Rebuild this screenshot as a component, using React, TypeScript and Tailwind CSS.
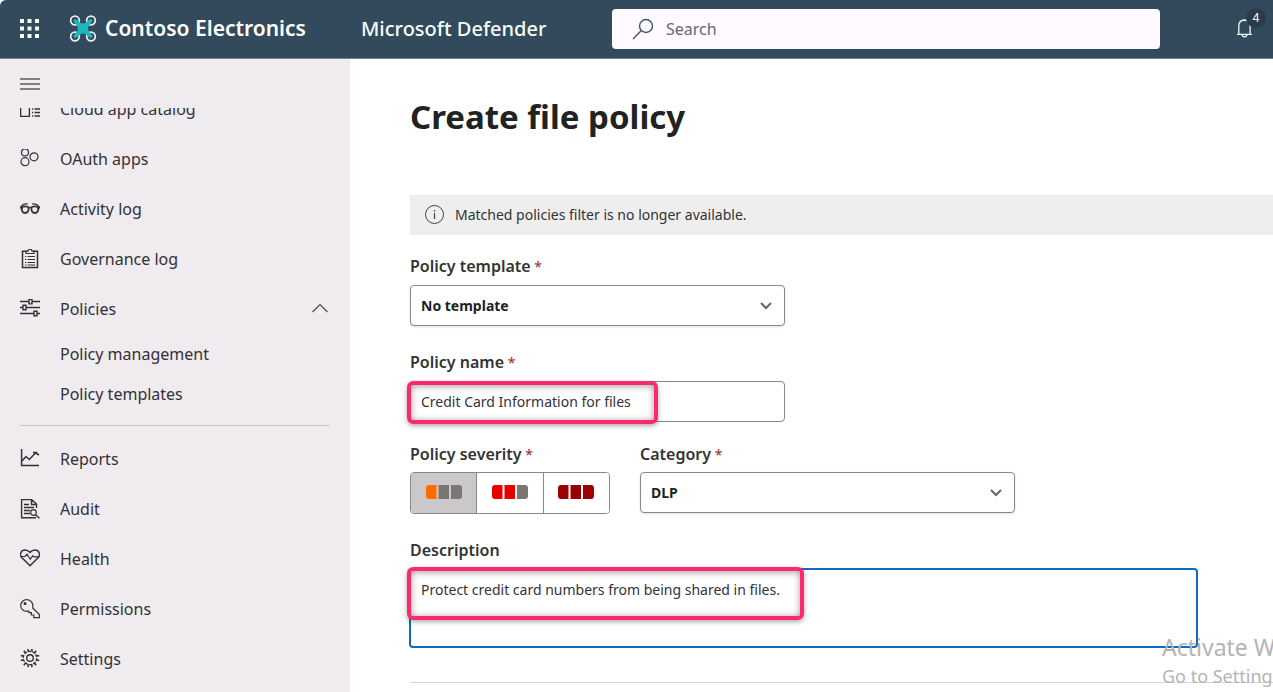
import React from "react";

type IconProps = { children: React.ReactNode };

function NavIcon({ children }: IconProps) {
  return (
    <svg
      viewBox="0 0 20 20"
      className="h-5 w-5 shrink-0"
      fill="none"
      stroke="#333237"
      strokeWidth="1.2"
      aria-hidden="true"
    >
      {children}
    </svg>
  );
}

const icons = {
  catalog: (
    <NavIcon>
      <path d="M.6 1v16.400h8.800V1z M12 10h1.200M14.500 10H20M12 13.500h1.200M14.500 13.500H20M12 17h1.200M14.500 17H20" strokeWidth="1.400" />
    </NavIcon>
  ),
  oauth: (
    <NavIcon>
      <circle cx="5" cy="3.400" r="3.500" />
      <circle cx="5" cy="12.700" r="4" />
      <circle cx="14" cy="7.800" r="4" />
    </NavIcon>
  ),
  glasses: (
    <NavIcon>
      <path d="M.5 9C1.500 6 4 4.700 8 5M19.500 9C18.500 6 16 4.700 12 5M8.500 9q1.500-1 3 0" />
      <path d="M1.800 8.200q3.200-1.700 6.800 0 .3 5.800-3.500 5.800T1.800 8.200zM18.200 8.200q-3.200-1.700-6.800 0-.3 5.800 3.500 5.800t3.300-5.800z" strokeWidth="1.800" />
      <path d="M.5 7.500l1.500 3M19.500 7.500l-1.500 3" strokeWidth="1.800" />
    </NavIcon>
  ),
  clipboard: (
    <NavIcon>
      <path d="M6.500 2.300h-4v16.200h15V2.300h-4" strokeWidth="1.500" />
      <path d="M6 4.500V2.100h2q.3-2 2-2t2 2h2v2.400z" />
      <path d="M5 7.500h1.300M7.500 7.500H15M5 10.500h1.300M7.500 10.500H15M5 13.500h1.300M7.500 13.500H15M5 16h1.300M7.500 16H15" />
    </NavIcon>
  ),
  sliders: (
    <NavIcon>
      <path d="M0 2.500h9M12 2.500h8M0 8.500h3M6 8.500h14M0 14.500h14M17 14.500h3" strokeWidth="1.500" />
      <path d="M9 .3h3v4.600H9zM3 6.200h3v4.600H3zM14 12.200h3v4.600h-3z" strokeWidth="1.400" />
    </NavIcon>
  ),
  reports: (
    <NavIcon>
      <path d="M1.600 0v16.500H19M2 12l4-4.500 3.300 3L16 3.500M13 3.500h3.500v1L19 6" strokeWidth="1.500" />
    </NavIcon>
  ),
  audit: (
    <NavIcon>
      <path d="M16.500 9V5l-5-4.500H1.600v18.300H16M11.500.5V5.500h5" strokeWidth="1.400" />
      <path d="M4 5.500h5M4 8.500h10M4 11.500h6M4 14.500h6" strokeWidth="1.400" />
      <circle cx="13.500" cy="13.500" r="2.800" />
      <path d="M15.500 15.700l4 3.600" strokeWidth="1.400" />
    </NavIcon>
  ),
  health: (
    <NavIcon>
      <path d="M10 16.700L1.900 8.800C-.8 5.600.8 1 5 1q3 0 5 2.400Q12 1 15 1c4.200 0 5.800 4.600 3.100 7.800z" strokeWidth="1.500" />
      <path d="M1 7.500h4l2-2.300 3.200 5 2.600-3.300 1.500 1H19" />
    </NavIcon>
  ),
  key: (
    <NavIcon>
      <path d="M6.800.6A6 6 0 0 0 .7 6.400c0 3.900 3.400 6.300 6.800 5.800h1.300l.2 1.500h2.400v2.300h2.400v2.600h5.600v-3L12.700 9C13.700 4.500 11 .6 6.800.6z" />
      <circle cx="5" cy="4.600" r=".9" fill="#333237" />
    </NavIcon>
  ),
  gear: (
    <NavIcon>
      <circle cx="10" cy="9" r="3.300" strokeWidth="1.400" />
      <path
        d="M8.300 2.600L8 -.2M11.700 2.600L12 -.2M14.100 4.200l2.100-2.300M5.900 4.200L3.800 1.900M16.200 7.300l3-.9M3.800 7.300l-3-.9M16.200 10.700l3 .9M3.800 10.700l-3 .9M14.100 13.800l2.100 2.300M5.900 13.800l-2.100 2.300M11.700 15.400l.3 2.800M8.300 15.400L8 18.200"
        strokeWidth="1.600"
      />
      <circle cx="10" cy="9" r="6.700" strokeWidth="1.200" strokeDasharray="3 1.200" />
    </NavIcon>
  ),
};

function NavRow({ icon, label }: { icon: React.ReactNode; label: string }) {
  return (
    <a href="#" className="flex h-[50px] items-center gap-5 pl-5 text-base">
      {icon}
      {label}
    </a>
  );
}

function RequiredMark() {
  return <span className="text-sm/4 font-normal text-[#a4262c]"> *</span>;
}

function Label({ htmlFor, children, required = false }: { htmlFor: string; children: React.ReactNode; required?: boolean }) {
  return (
    <label htmlFor={htmlFor} className="block text-base/5 font-semibold text-[#333]">
      {children}
      {required && <RequiredMark />}
    </label>
  );
}

function SelectBox({ id, value }: { id: string; value: string }) {
  return (
    <div className="relative w-[375px]">
      <select
        id={id}
        className="h-[41px] w-full appearance-none rounded-sm border border-[#8a8886] bg-white px-2.5 text-sm font-bold text-[#222] shadow-sm"
      >
        <option>{value}</option>
      </select>
      <svg viewBox="0 0 12 8" className="pointer-events-none absolute top-[17px] right-[13px] h-2 w-3" fill="none" stroke="#666" strokeWidth="2" aria-hidden="true">
        <path d="M1 1l5 5 5-5" />
      </svg>
    </div>
  );
}

function Severity({ label, colors, selected = false }: { label: string; colors: [string, string, string]; selected?: boolean }) {
  return (
    <button
      type="button"
      aria-label={label}
      aria-pressed={selected}
      className={`flex flex-1 items-center justify-center ${selected ? "bg-[#cbc8cb]" : "bg-white"}`}
    >
      <svg viewBox="0 0 36 16" className="h-4 w-9" aria-hidden="true">
        <path d="M3 0h7.500v14H3a3 3 0 0 1-3-3V3a3 3 0 0 1 3-3z" fill={colors[0]} />
        <path d="M12.500 0h10.500v14H12.500z" fill={colors[1]} />
        <path d="M25 0h8a3 3 0 0 1 3 3v8a3 3 0 0 1-3 3h-8z" fill={colors[2]} />
      </svg>
    </button>
  );
}

export default function App() {
  return (
    <div className="flex h-screen flex-col overflow-hidden bg-white font-['Noto_Sans','Open_Sans',sans-serif] text-[#333237]">
      <header className="flex h-[59px] shrink-0 items-center rounded-tl-md border-b border-[#71828f] bg-[#33495c] pl-5 text-white">
        <button type="button" aria-label="App launcher">
          <svg viewBox="0 0 19 20" className="h-5 w-[19px]" fill="#fafff5" aria-hidden="true">
            <path d="M0 0h4v4H0zM7.500 0h4v4h-4zM15 0h4v4h-4zM0 7.500h4v4H0zM7.500 7.500h4v4h-4zM15 7.500h4v4h-4zM0 15h4v4H0zM7.500 15h4v4h-4zM15 15h4v4h-4z" />
          </svg>
        </button>
        <div className="ml-[30px] flex w-[292px] items-center gap-2">
          <svg viewBox="0 0 27 28" className="h-7 w-7" aria-hidden="true">
            <g fill="none" stroke="#e9eef2" strokeWidth="1.800">
              <circle cx="5.500" cy="5.500" r="4.300" />
              <circle cx="21.500" cy="5.500" r="4.300" />
              <circle cx="5.500" cy="21.500" r="4.300" />
              <circle cx="21.500" cy="21.500" r="4.300" />
            </g>
            <path
              d="M4.500 6L6 4.500L11 8.500Q13.500 9.800 16 8.500L21 4.500L22.500 6L18.500 11Q17.200 13.500 18.500 16L22.500 21L21 22.500L16 18.500Q13.500 17.200 11 18.500L6 22.500L4.500 21L8.500 16Q9.800 13.500 8.500 11z"
              fill="#1bb9bd"
              stroke="#1bb9bd"
              strokeWidth="1.200"
              strokeLinejoin="round"
            />
          </svg>
          <span className="text-[21px] font-semibold whitespace-nowrap">Contoso Electronics</span>
        </div>
        <span className="w-[251px] shrink-0 text-xl font-medium text-[#f5fff8]">Microsoft Defender</span>
        <div className="flex h-10 flex-1 items-center gap-3 rounded bg-[#fefaff] pl-5 text-[#68666c]">
          <svg viewBox="0 0 22 22" className="h-[22px] w-[22px]" fill="none" stroke="#41566a" strokeWidth="1.400" aria-hidden="true">
            <circle cx="14" cy="8" r="6.500" />
            <path d="M9.400 12.600L1 21" />
          </svg>
          <input type="search" aria-label="Search" placeholder="Search" className="flex-1 bg-transparent text-base outline-none placeholder:text-[#68666c]" />
        </div>
        <button type="button" aria-label="Notifications, 4 new" className="relative mr-[19px] ml-[76px] flex h-10 w-[18px] items-center">
          <svg viewBox="0 0 18 22" className="h-[22px] w-[18px]" fill="none" stroke="#eff8f3" strokeWidth="1.300" aria-hidden="true">
            <path d="M1 16.400h15M2.800 16V8q0-5.500 5.500-6 5.800.4 5.800 6v8M6 16.500q.3 2.300 2.500 2.300t2.500-2.300" />
          </svg>
          <span className="absolute -top-px -right-3 flex h-5 w-5 items-center justify-center rounded-full bg-[#2a3b4a] text-xs text-white">4</span>
        </button>
      </header>

      <div className="flex min-h-0 flex-1">
        <aside className="flex w-[350px] shrink-0 flex-col bg-[#efebef]">
          <button type="button" aria-label="Toggle navigation" className="flex h-[49px] shrink-0 items-center pl-5">
            <svg viewBox="0 0 20 12" className="h-3 w-5" stroke="#5d5a60" strokeWidth="1.300" aria-hidden="true">
              <path d="M0 1h20M0 6h20M0 11h20" />
            </svg>
          </button>
          <nav className="min-h-0 flex-1 overflow-hidden">
            <div className="-mt-6">
              <NavRow icon={icons.catalog} label="Cloud app catalog" />
              <NavRow icon={icons.oauth} label="OAuth apps" />
              <NavRow icon={icons.glasses} label="Activity log" />
              <NavRow icon={icons.clipboard} label="Governance log" />
              <div className="flex items-center justify-between pr-[22px]">
                <NavRow icon={icons.sliders} label="Policies" />
                <svg viewBox="0 0 16 12" className="h-3 w-4" fill="none" stroke="#4b494e" strokeWidth="1.200" aria-hidden="true">
                  <path d="M.5 9L8 1.500 15.500 9" />
                </svg>
              </div>
              <a href="#" className="flex h-10 items-center pl-[60px]">Policy management</a>
              <a href="#" className="flex h-10 items-center pl-[60px]">Policy templates</a>
              <hr className="mx-5 mt-[11px] mb-2 border-[#c8c4c9]" />
              <NavRow icon={icons.reports} label="Reports" />
              <NavRow icon={icons.audit} label="Audit" />
              <NavRow icon={icons.health} label="Health" />
              <NavRow icon={icons.key} label="Permissions" />
              <NavRow icon={icons.gear} label="Settings" />
            </div>
          </nav>
        </aside>

        <main className="min-w-0 flex-1 overflow-hidden pt-9 pl-[60px]">
          <h1 className="text-[33px]/[43px] font-bold text-[#222]">Create file policy</h1>
          <div className="mt-[57px] flex h-10 items-center gap-[11px] bg-[#eee] pl-[15px] text-sm">
            <svg viewBox="0 0 19 20" className="h-5 w-[19px]" fill="none" stroke="#444" aria-hidden="true">
              <circle cx="9.500" cy="9.500" r="9" />
              <path d="M9.500 8v6M9.500 5v1.500" strokeWidth="1.200" />
            </svg>
            Matched policies filter is no longer available.
          </div>

          <form className="mt-[21px]">
            <Label htmlFor="template" required>Policy template</Label>
            <div className="mt-[9px]">
              <SelectBox id="template" value="No template" />
            </div>

            <div className="mt-[26px]">
              <Label htmlFor="name" required>Policy name</Label>
            </div>
            <div className="relative mt-[9px] h-[41px] w-[375px]">
              <input
                id="name"
                type="text"
                defaultValue="Credit Card Information for files"
                className="h-full w-full rounded-sm border border-[#8a8886] px-2.5 text-sm outline-none"
              />
              <div className="pointer-events-none absolute top-0 -left-[3px] h-[43px] w-[251px] rounded-md border-4 border-[#fb2b6b] shadow-[0_2px_5px_#0005,inset_0_1px_7px_#0006]" />
            </div>

            <div className="mt-[22px] flex gap-[30px]">
              <div className="w-[200px]">
                <div id="severity-label" className="text-base/5 font-semibold text-[#333]">
                  Policy severity
                  <RequiredMark />
                </div>
                <div role="group" aria-labelledby="severity-label" className="mt-2 flex h-[42px] divide-x divide-[#8a8886] overflow-hidden rounded-sm border border-[#8a8886]">
                  <Severity label="Low" colors={["#ff6d00", "#7b7673", "#7b7673"]} selected />
                  <Severity label="Medium" colors={["#e80000", "#e80000", "#7b7673"]} />
                  <Severity label="High" colors={["#9c0000", "#9c0000", "#9c0000"]} />
                </div>
              </div>
              <div>
                <Label htmlFor="category" required>Category</Label>
                <div className="mt-2">
                  <SelectBox id="category" value="DLP" />
                </div>
              </div>
            </div>

            <div className="mt-[26px]">
              <Label htmlFor="description">Description</Label>
            </div>
            <div className="relative mt-2 mr-[75px] -ml-px h-20">
              <textarea
                id="description"
                defaultValue="Protect credit card numbers from being shared in files."
                className="block h-full w-full resize-none rounded-sm border-2 border-[#0f6cbd] p-2.5 text-sm outline-none"
              />
              <div className="pointer-events-none absolute -top-px -left-0.5 h-[53px] w-[397px] rounded-md border-4 border-[#fb2b6b] shadow-[0_2px_5px_#0005,inset_0_1px_7px_#0006]" />
            </div>
            <hr className="mt-[34px] border-[#d5d5d5]" />
          </form>
        </main>
      </div>

      <div className="pointer-events-none absolute right-0 bottom-0 w-[111px] overflow-hidden pb-0.5 whitespace-nowrap text-[#b5b3b5]">
        <p className="text-[23px]/[30px]">Activate W</p>
        <p className="text-lg/7">Go to Setting</p>
      </div>
    </div>
  );
}
